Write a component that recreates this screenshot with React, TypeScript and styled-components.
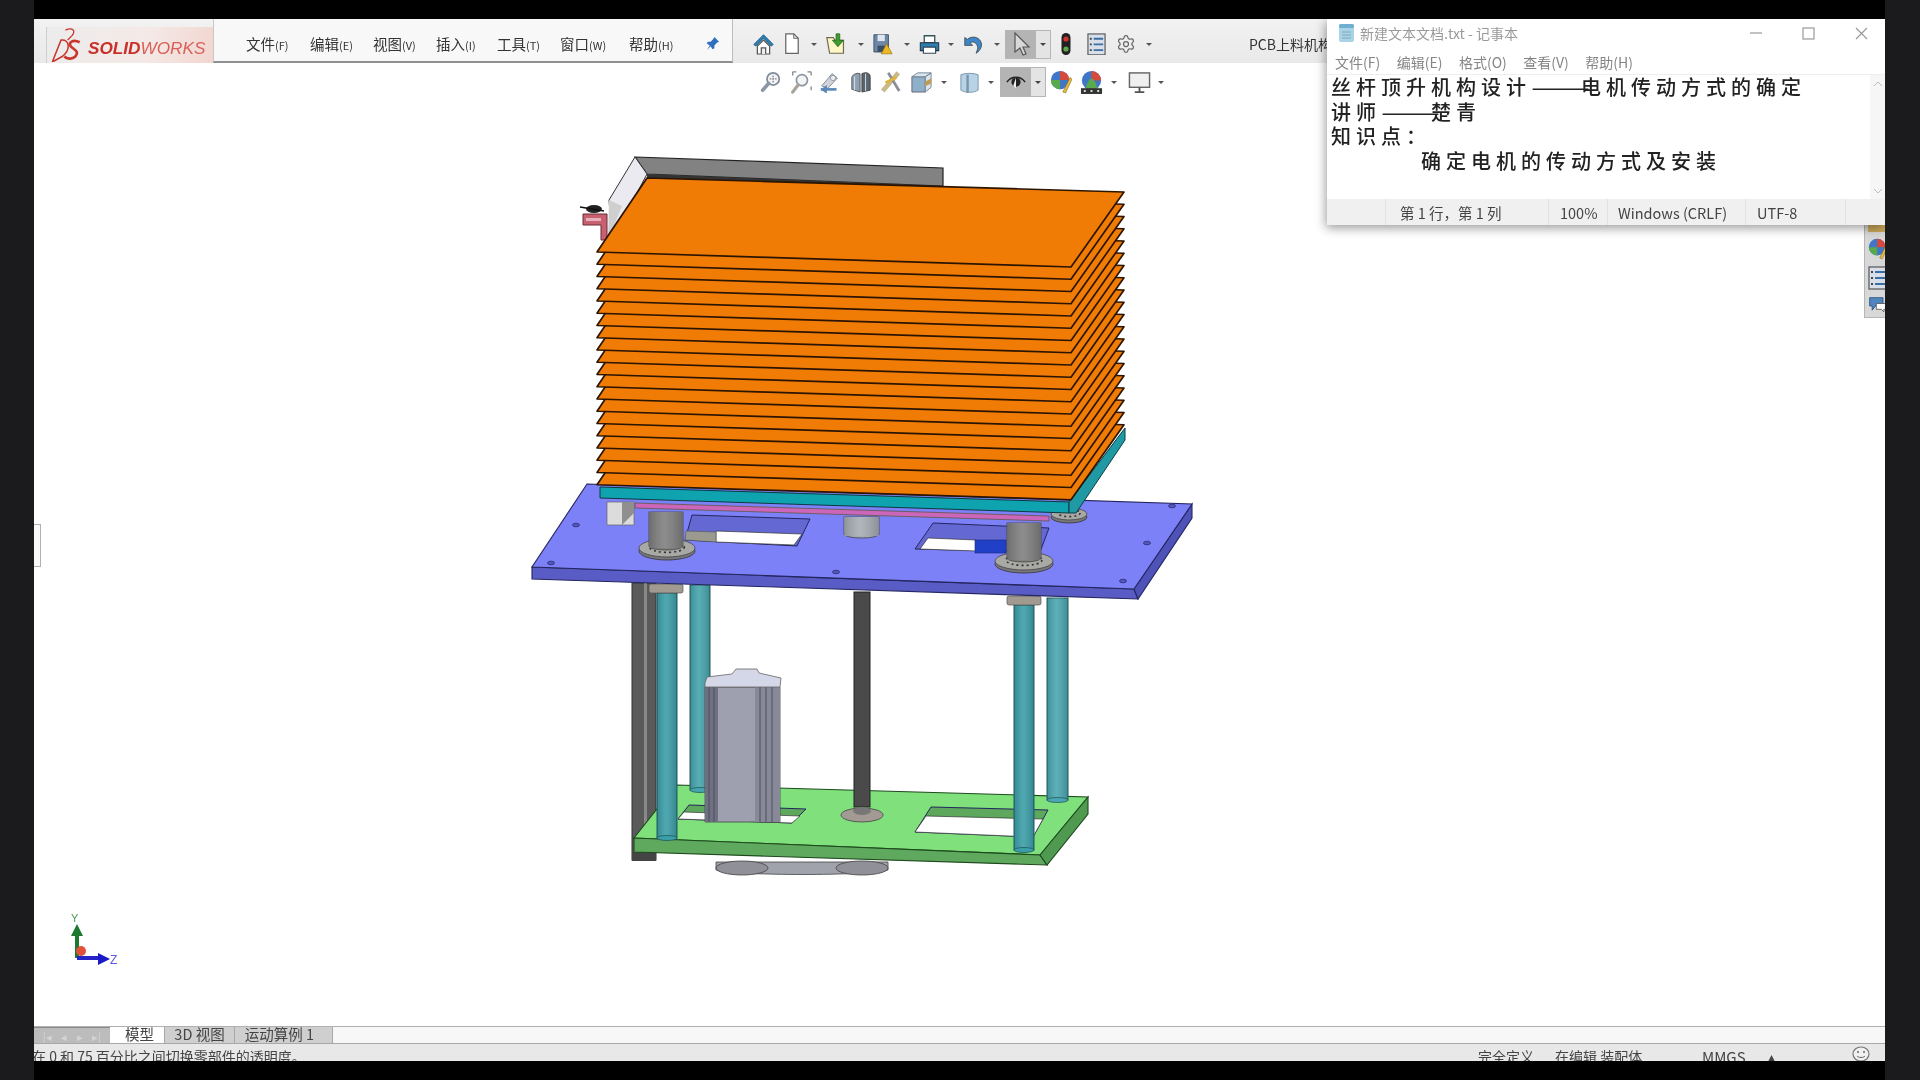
import styled, { createGlobalStyle } from 'styled-components';
import { Settings } from 'lucide-react';

const GlobalStyle = createGlobalStyle`
  html, body {
    margin: 0;
    padding: 0;
    background: #000;
    overflow: hidden;
  }
  * { box-sizing: border-box; }
`;

const cjk = `"Noto Sans CJK SC", "Liberation Sans", sans-serif`;

const Page = styled.div`
  display: grid;
  grid-template-columns: 34px 1fr 35px;
  width: 1920px;
  height: 1080px;
  background: #000;
  font-family: ${cjk};
`;

const SideBar = styled.div`
  background: #1b1b1d;
`;

const Center = styled.div`
  display: flex;
  flex-direction: column;
  min-width: 0;
`;

const Band = styled.div`
  height: 19px;
  flex: none;
  background: #000;
`;

const AppFrame = styled.div`
  position: relative;
  flex: 1;
  display: flex;
  flex-direction: column;
  background: #fff;
  overflow: hidden;
  filter: blur(0.45px);
`;

/* ---- top bar ---- */
const Toolbar = styled.div`
  display: flex;
  height: 44px;
  flex: none;
  background: linear-gradient(#f2f2f2, #e9e9e9);
  position: relative;
  z-index: 2;
`;

const LogoBox = styled.div`
  width: 167px;
  margin: 8px 0 0 12px;
  padding-left: 3px;
  display: flex;
  align-items: center;
  gap: 6px;
  background: linear-gradient(100deg, #ececec, #f4e9e6 60%, #f2d6d0);
  border-left: 1px solid #cfcfcf;
`;

const LogoWord = styled.span`
  font: italic 700 17.2px "Liberation Sans", sans-serif;
  color: #c9302a;
  white-space: nowrap;
  margin-top: 6px;
  em {
    font-weight: 400;
    font-style: italic;
    color: #d9605a;
  }
`;

const MenuPanel = styled.div`
  width: 520px;
  flex: none;
  display: flex;
  align-items: center;
  padding: 6px 0 0 32px;
  background: #f8f8f8;
  border-bottom: 2px solid #8f8f8f;
  border-right: 1px solid #bdbdbd;
  border-left: 1px solid #c8c8c8;
`;

const MenuItem = styled.span<{ $w: number }>`
  width: ${(p) => p.$w}px;
  flex: none;
  font-size: 14.5px;
  color: #333;
  white-space: nowrap;
  small {
    font-size: 11px;
  }
`;

const PinSlot = styled.span`
  display: flex;
  margin-left: 1px;
`;

const ToolStrip = styled.div`
  flex: 1;
  min-width: 0;
  display: flex;
  align-items: center;
  padding-left: 20px;
  padding-top: 6px;
  overflow: hidden;
`;

const HudBar = styled.div`
  position: absolute;
  left: 726px;
  top: 48px;
  height: 30px;
  display: flex;
  align-items: center;
  z-index: 1;
`;

const Slot = styled.span<{ $w: number; $ml?: number }>`
  flex: none;
  display: flex;
  align-items: center;
  justify-content: center;
  width: ${(p) => p.$w}px;
  margin-left: ${(p) => p.$ml ?? 0}px;
  svg {
    display: block;
    width: 100%;
  }
`;

const Caret = styled.span<{ $ml?: number }>`
  flex: none;
  width: 8px;
  margin-left: ${(p) => p.$ml ?? 0}px;
  display: flex;
  justify-content: center;
  &::before {
    content: '';
    border-left: 3px solid transparent;
    border-right: 3px solid transparent;
    border-top: 3px solid #555;
  }
`;

const SplitButton = styled.span<{ $ml?: number; $h: number }>`
  flex: none;
  width: 46px;
  height: ${(p) => p.$h}px;
  margin-left: ${(p) => p.$ml ?? 0}px;
  display: grid;
  grid-template-columns: 30px 1fr;
  border: 1px solid #b5b5b5;
  background: #e4e4e4;
`;

const SplitMain = styled.span`
  background: #b4b4b4;
  display: flex;
  align-items: center;
  justify-content: center;
`;

const SplitArrow = styled.span`
  display: flex;
  align-items: center;
  justify-content: center;
  &::before {
    content: '';
    border-left: 3px solid transparent;
    border-right: 3px solid transparent;
    border-top: 3px solid #444;
  }
`;

const DocTitle = styled.span`
  flex: none;
  margin-left: 96px;
  font-size: 14px;
  color: #333;
  white-space: nowrap;
`;

/* ---- viewport ---- */
const Viewport = styled.div`
  position: relative;
  flex: 1;
  background: #fff;
`;

const Scene = styled.svg`
  position: absolute;
  left: 0;
  top: 0;
`;

const LeftHandle = styled.div`
  position: absolute;
  left: 0;
  top: 505px;
  width: 7px;
  height: 43px;
  background: #fafafa;
  border: 1px solid #b0b0b0;
  border-left: none;
`;

const TaskPane = styled.div`
  position: absolute;
  right: 0;
  top: 204px;
  width: 21px;
  height: 95px;
  padding-left: 3px;
  display: flex;
  flex-direction: column;
  gap: 6px;
  background: #d8d8d8;
  border: 1px solid #b5b5b5;
  border-right: none;
  svg {
    display: block;
    width: 20px;
  }
`;

const TaskPaneGold = styled.span`
  height: 8px;
  flex: none;
  background: #c9a85a;
`;

/* ---- notepad ---- */
const Notepad = styled.div`
  position: absolute;
  left: 1293px;
  right: 0;
  top: 0;
  height: 206px;
  display: flex;
  flex-direction: column;
  background: #fff;
  box-shadow: -1px 3px 10px rgba(0, 0, 0, 0.4);
  z-index: 3;
`;

const NoteTitleBar = styled.div`
  height: 30px;
  flex: none;
  display: flex;
  align-items: center;
  padding: 0 0 2px 11px;
  gap: 5px;
  font-size: 14px;
  color: #9a9a9a;
`;

const WinButtons = styled.div`
  margin-left: auto;
  margin-right: -3px;
  display: flex;
  align-items: center;
  color: #9a9a9a;
  svg {
    display: block;
  }
`;

const WinButton = styled.span`
  width: 53px;
  display: flex;
  justify-content: center;
`;

const NoteMenu = styled.div`
  height: 25px;
  flex: none;
  display: flex;
  align-items: center;
  padding-left: 8px;
  gap: 16.5px;
  font-size: 14px;
  color: #858585;
`;

const NoteBody = styled.div`
  flex: 1;
  display: flex;
  min-height: 0;
  border-top: 1px solid #eee;
`;

const NoteText = styled.div`
  flex: 1;
  padding: 0 0 0 4px;
  font: 500 20px/24.5px ${cjk};
  letter-spacing: 5px;
  color: #222;
  white-space: pre;
  overflow: hidden;
`;

const Dash = styled.span`
  display: inline-block;
  width: 50px;
  letter-spacing: 0;
  transform: scaleX(1.75);
  transform-origin: left center;
`;

const Indented = styled.div`
  padding-left: 90px;
`;

const NoteScroll = styled.div`
  width: 15px;
  flex: none;
  display: flex;
  flex-direction: column;
  justify-content: space-between;
  align-items: center;
  padding: 6px 0 5px;
  background: #f6f6f6;
  color: #bbb;
  svg {
    display: block;
  }
`;

const NoteStatus = styled.div`
  height: 26px;
  flex: none;
  display: flex;
  align-items: center;
  background: #f0f0f0;
  font-size: 14.5px;
  color: #444;
`;

const NoteCell = styled.span<{ $w: number; $pl: number }>`
  width: ${(p) => p.$w}px;
  flex: none;
  height: 100%;
  display: flex;
  align-items: center;
  padding-left: ${(p) => p.$pl}px;
  border-right: 1px solid #e2e2e2;
  white-space: nowrap;
`;

/* ---- bottom ---- */
const TabRow = styled.div`
  height: 17px;
  flex: none;
  display: flex;
  background: #f7f7f7;
  border-top: 1px solid #b0b0b0;
  font-size: 14.5px;
  line-height: 14px;
  color: #444;
`;

const NavBlock = styled.div`
  width: 76px;
  display: flex;
  align-items: center;
  justify-content: space-around;
  padding: 0 4px;
  background: #bcbcbc;
  border-top: 1px solid #8a8a8a;
  color: #d4d4d4;
  font-size: 11px;
`;

const Tab = styled.div<{ $w: number; $active?: boolean; $pl?: number; $pr?: number }>`
  width: ${(p) => p.$w}px;
  padding: 0 ${(p) => p.$pr ?? 0}px 0 ${(p) => p.$pl ?? 0}px;
  text-align: center;
  white-space: nowrap;
  background: ${(p) => (p.$active ? '#fff' : '#cfcfcf')};
  border-right: 1px solid #a8a8a8;
`;

const StatusRow = styled.div`
  height: 18px;
  flex: none;
  display: flex;
  padding: 5px 15px 0 0;
  background: #e8e8e8;
  border-top: 1px solid #a8a8a8;
  font-size: 14px;
  line-height: 15px;
  color: #444;
  overflow: hidden;
  white-space: nowrap;
`;

const StatusMsg = styled.div`
  flex: 1;
  margin-left: -2px;
`;

const StatusItem = styled.div<{ $w: number; $size?: number }>`
  width: ${(p) => p.$w}px;
  flex: none;
  font-size: ${(p) => p.$size ?? 14}px;
`;

const SmileSlot = styled.div`
  flex: none;
  width: 18px;
  margin-top: -3px;
  svg {
    display: block;
  }
`;

/* ---- drawn icons ---- */
const HomeIcon = () => (
  <svg viewBox="0 0 24 26">
    <path d="M12 2 1 13l2 2 9-9 9 9 2-2Z" fill="#2b7fb5" stroke="#1a5a85" strokeWidth="1" />
    <path d="M5 15v9h14v-9l-7-7Z" fill="#fff" stroke="#555" strokeWidth="1.4" />
    <path d="M9.5 24v-7h5v7" fill="#eee" stroke="#555" strokeWidth="1.4" />
  </svg>
);
const PageIcon = () => (
  <svg viewBox="0 0 18 26">
    <path d="M2 2h9l5 5v17H2Z" fill="#fff" stroke="#666" strokeWidth="1.4" />
    <path d="M11 2v5h5" fill="none" stroke="#666" strokeWidth="1.2" />
  </svg>
);
const OpenIcon = () => (
  <svg viewBox="0 0 26 26">
    <path d="M2 6h7l2 3h9v14H5Z" fill="#fff6c8" stroke="#6b6b52" strokeWidth="1.3" />
    <path d="M12 2h4v7h4l-6 7-6-7h4Z" fill="#3f9b2e" stroke="#23651a" strokeWidth="0.8" />
  </svg>
);
const SaveIcon = () => (
  <svg viewBox="0 0 22 26">
    <path d="M1 3h16v19H1Z" fill="#6d87a6" stroke="#3c5068" />
    <path d="M5 3h8v7H5Z" fill="#dfe6ee" />
    <path d="M5 15h8v7H5Z" fill="#3a4f66" />
    <path d="M15 13l6 11H9Z" fill="#f0b71e" stroke="#8a6a10" strokeWidth="0.7" />
  </svg>
);
const PrintIcon = () => (
  <svg viewBox="0 0 24 24">
    <path d="M6 2h12v8H6Z" fill="#fff" stroke="#355" strokeWidth="1.5" />
    <path d="M1.5 10h21v9h-21Z" fill="#2f7eb0" stroke="#234" strokeWidth="1.2" />
    <path d="M5 15h14v7H5Z" fill="#fff" stroke="#345" strokeWidth="1.3" />
  </svg>
);
const UndoIcon = () => (
  <svg viewBox="0 0 24 24">
    <path d="M2 4v9h9L8 10c4-2 8 0 9 6l-2 6c5-3 8-9 5-14-3-5-10-6-15-2Z" fill="#3a86c8" stroke="#444" strokeWidth="0.9" />
  </svg>
);
const CursorIcon = () => (
  <svg viewBox="0 0 20 26" width="20">
    <path d="M4 2v19l5-4 3 7 3-1-3-7h6Z" fill="#d8d8d8" stroke="#555" strokeWidth="1.2" />
  </svg>
);
const LightIcon = () => (
  <svg viewBox="0 0 10 24">
    <rect x="0.5" y="1" width="9" height="22" rx="4.5" fill="#222" />
    <circle cx="5" cy="7" r="2.6" fill="#d0342c" />
    <circle cx="5" cy="17" r="2.6" fill="#5ca84a" />
  </svg>
);
const ListIcon = () => (
  <svg viewBox="0 0 20 24">
    <rect x="1" y="1" width="18" height="22" fill="#d8dfe8" stroke="#555" strokeWidth="1.2" />
    <path d="M7 6h10M7 12h10M7 18h10" stroke="#3a6ea5" strokeWidth="2" />
    <path d="M3 6h2M3 12h2M3 18h2" stroke="#444" strokeWidth="2" />
  </svg>
);
const MagIcon = () => (
  <svg viewBox="0 0 24 26">
    <circle cx="15" cy="9" r="7" fill="#f4f4f4" stroke="#7d8c9b" strokeWidth="2" />
    <path d="M15 5v8M11 9h8" stroke="#889" strokeWidth="1.5" strokeDasharray="2 1" />
    <path d="M10 14 3 22" stroke="#8a95a8" strokeWidth="4" strokeLinecap="round" />
  </svg>
);
const AreaIcon = () => (
  <svg viewBox="0 0 26 26">
    <circle cx="14" cy="11" r="6" fill="#f5f5f5" stroke="#8a96a4" strokeWidth="1.8" />
    <path d="M10 16 4 24" stroke="#a7a59a" strokeWidth="3.5" strokeLinecap="round" />
    <path d="M4 2h4M20 2h4M24 2v4M24 18v4M4 2v4" stroke="#888" strokeWidth="1.4" />
  </svg>
);
const PrevIcon = () => (
  <svg viewBox="0 0 24 26">
    <path d="M3 17 15 3l6 5-11 12Z" fill="#cfd2d8" stroke="#7a8590" />
    <circle cx="16" cy="8" r="3" fill="#eee" stroke="#8a95a0" />
    <path d="M2 21h18" stroke="#5b88b8" strokeWidth="3" />
    <path d="M2 21l7-5v10Z" fill="#5b88b8" />
  </svg>
);
const SectionIcon = () => (
  <svg viewBox="0 0 24 26">
    <path d="M2 8c1-4 7-5 9-4v20l-9-3Z" fill="#8fa0b2" stroke="#555" />
    <path d="M13 4c4-2 9-1 9 3v15l-9 2Z" fill="#59656f" stroke="#444" />
    <path d="M5 7v15M17 4v19" stroke="#dfe5ea" />
  </svg>
);
const DynamicIcon = () => (
  <svg viewBox="0 0 24 26">
    <path d="M3 23 20 3" stroke="#c9b98a" strokeWidth="5" />
    <path d="M9 3l12 20" stroke="#8a8f96" strokeWidth="3" />
    <path d="M6 14 18 8" stroke="#e2b33a" strokeWidth="3" />
  </svg>
);
const ViewOrientIcon = () => (
  <svg viewBox="0 0 24 26">
    <path d="M2 7h14v16H2Z" fill="#8fb0c9" stroke="#667" />
    <path d="M2 7l6-4h14l-6 4ZM16 7l6-4v15l-6 5Z" fill="#dbe5ec" stroke="#789" />
    <path d="M16 12l6-3v5l-6 3Z" fill="#c29b4e" />
  </svg>
);
const CubeIcon = () => (
  <svg viewBox="0 0 24 26">
    <path d="M3 5c4-2 14-2 18 0v16c-4 3-14 3-18 0Z" fill="#b8d2e6" stroke="#7995aa" />
    <path d="M10 5v19" stroke="#7995aa" strokeWidth="2.5" />
  </svg>
);
const EyeIcon = () => (
  <svg viewBox="0 0 24 22" width="22">
    <path d="M2 11c5-7 15-7 20 0" fill="none" stroke="#222" strokeWidth="1.6" />
    <circle cx="12" cy="11" r="5" fill="#222" />
    <path d="M12 6v12l-3-3Z" fill="#eee" />
  </svg>
);
const BallIcon = () => (
  <svg viewBox="0 0 24 26">
    <circle cx="11" cy="11" r="10" fill="#3f76c8" />
    <path d="M11 1a10 10 0 0 1 10 10H11Z" fill="#d64a3c" />
    <path d="M1 11a10 10 0 0 0 10 10V11Z" fill="#58aa4c" />
    <path d="M14 24 22 8l2 2-7 15Z" fill="#e6bb3a" stroke="#7b6418" strokeWidth="0.6" />
  </svg>
);
const SceneIcon = () => (
  <svg viewBox="0 0 24 26">
    <circle cx="12" cy="11" r="10" fill="#3f76c8" />
    <path d="M12 1a10 10 0 0 1 10 10H12Z" fill="#d64a3c" />
    <path d="M6 20c1-8 5-11 6-11s5 3 6 11Z" fill="#58aa4c" />
    <rect x="1" y="19" width="22" height="6" fill="#333" />
    <path d="M4 22h2M11 22h2M18 22h2" stroke="#ddd" strokeWidth="2" />
  </svg>
);
const MonitorIcon = () => (
  <svg viewBox="0 0 24 24">
    <rect x="1.5" y="2" width="21" height="15" fill="#f0f0f0" stroke="#666" strokeWidth="1.5" />
    <path d="M12 17v4M7 22h10" stroke="#555" strokeWidth="2" />
  </svg>
);
const ChatIcon = () => (
  <svg viewBox="0 0 24 20">
    <path d="M2 2h16v10H9l-4 5v-5H2Z" fill="#4f86c0" stroke="#2a4f78" />
    <path d="M10 9h12v7h-3v3l-3-3h-6Z" fill="#fff" stroke="#555" />
  </svg>
);
const PinIcon = () => (
  <svg viewBox="0 0 16 16" width="15">
    <path d="M10 1l5 5-2 1-3 3 0 3-2 1-2-3-4 4 3-5-3-2 1-2 3 0 3-3Z" fill="#2f6fc0" />
  </svg>
);
const DsMark = () => (
  <svg viewBox="2 1 27 31" width="32" height="34">
    <path d="M3 32 11 12c8-1 9 9 1 15l-9 5" fill="none" stroke="#c9362d" strokeWidth="1.4" />
    <path d="M15 3c6-3 10 0 6 5l-4 4" fill="none" stroke="#c9362d" strokeWidth="1.2" />
    <path d="M28 14c-6-3-11 0-8 4 3 3 8 4 4 9-3 3-8 2-10 0" fill="none" stroke="#c9362d" strokeWidth="2.4" />
  </svg>
);
const NoteFileIcon = () => (
  <svg viewBox="0 0 17 20" width="17" height="20">
    <rect x="1" y="2" width="15" height="17" rx="2" fill="#a9d3e6" />
    <rect x="1" y="1" width="15" height="4" rx="1.5" fill="#6fb0d0" />
    <path d="M4 9h9M4 12h9M4 15h9" stroke="#7fa9bd" />
  </svg>
);
const SmileIcon = () => (
  <svg viewBox="0 0 18 16" width="18" height="16">
    <ellipse cx="9" cy="8" rx="8" ry="7" fill="#f0f0f0" stroke="#777" strokeWidth="1.2" />
    <circle cx="6" cy="6" r="1" fill="#666" />
    <circle cx="12" cy="6" r="1" fill="#666" />
    <path d="M5 10c2 2 6 2 8 0" fill="none" stroke="#666" />
  </svg>
);

/* ---- CAD model, in page coordinates ---- */
const plateCount = 19;
const plateStep = 12.25;

const pts = (list: number[][], dy = 0) => list.map(([x, y]) => `${x},${y + dy}`).join(' ');

const Hole = ({ outer, wall, open }: { outer: number[][]; wall: string; open: number[][] }) => (
  <g>
    <polygon points={pts(outer)} fill={wall} stroke="#23265f" strokeWidth="1" />
    <polygon points={pts(open)} fill="#fff" stroke="#333" strokeWidth="0.7" />
  </g>
);

const Rod = ({ x, w, y1, y2, color, edge }: { x: number; w: number; y1: number; y2: number; color: string; edge: string }) => (
  <g>
    <rect x={x} y={y1} width={w} height={y2 - y1} fill={color} stroke={edge} strokeWidth="1" />
    <rect x={x} y={y1} width={w} height={y2 - y1} fill="url(#cyl)" />
    <ellipse cx={x + w / 2} cy={y2} rx={w / 2} ry={2.5} fill={color} stroke={edge} strokeWidth="0.8" />
  </g>
);

const Flange = ({ cx, cy, rx, ry }: { cx: number; cy: number; rx: number; ry: number }) => (
  <g>
    <ellipse cx={cx} cy={cy + 3} rx={rx} ry={ry} fill="#77777c" stroke="#333" strokeWidth="0.8" />
    <ellipse cx={cx} cy={cy} rx={rx} ry={ry} fill="#a8a8a4" stroke="#444" strokeWidth="0.8" />
    <ellipse cx={cx} cy={cy - 1} rx={rx * 0.62} ry={ry * 0.6} fill="none" stroke="#333" strokeWidth="1.6" strokeDasharray="2 3" />
  </g>
);

const BoltHole = ({ x, y }: { x: number; y: number }) => (
  <ellipse cx={x} cy={y} rx={3.5} ry={1.8} fill="#5558b8" stroke="#2a2d78" strokeWidth="0.8" />
);

const Column = ({ x, w, y1, y2, color }: { x: number; w: number; y1: number; y2: number; color: string }) => (
  <g>
    <rect x={x} y={y1} width={w} height={y2 - y1} fill={color} stroke="#444" strokeWidth="0.8" />
    <ellipse cx={x + w / 2} cy={y2} rx={w / 2} ry={4} fill={color} stroke="#444" strokeWidth="0.8" />
    <rect x={x + 0.4} y={y1} width={w - 0.8} height={y2 - y1 + 2} fill={color} />
    <rect x={x + 0.4} y={y1} width={w - 0.8} height={y2 - y1 + 2} fill="url(#cyl)" />
  </g>
);

const Model = () => {
  const plates = Array.from({ length: plateCount + 1 }, (_, i) => plateCount - i);
  return (
    <Scene width="1851" height="963" viewBox="34 63 1851 963">
      <defs>
        <linearGradient id="cyl" x1="0" x2="1" y1="0" y2="0">
          <stop offset="0" stopColor="#000" stopOpacity="0.14" />
          <stop offset="0.45" stopColor="#fff" stopOpacity="0.1" />
          <stop offset="1" stopColor="#000" stopOpacity="0.16" />
        </linearGradient>
      </defs>

      {/* rear frame */}
      <polygon points="635,157 943,168 943,186 647,174" fill="#828282" stroke="#222" strokeWidth="1.2" />
      <polygon points="647,174 943,186 943,190 647,178" fill="#333" />
      <polygon points="635,157 647,174 612,240 609,200" fill="#eaeaf0" stroke="#333" strokeWidth="1" />
      <polygon points="609,200 622,206 608,240" fill="#cfcfcf" />
      <path d="M583 214h24v26h-6v-15h-18Z" fill="#c9606f" stroke="#6a2a38" strokeWidth="1" />
      <rect x="586" y="218" width="15" height="3" fill="#e8b0b8" />
      <ellipse cx="594" cy="209" rx="8" ry="4" fill="#222" />
      <path d="M580 207l24 4" stroke="#111" strokeWidth="1.6" />

      {/* lower plate and belt */}
      <rect x="632" y="583" width="24" height="277" fill="#5a5a5a" stroke="#333" strokeWidth="1" />
      <rect x="644" y="583" width="3" height="277" fill="#888" />
      <rect x="632" y="852" width="24" height="9" fill="#444" />
      <path d="M716 862h172v8c-20 6-150 6-172 0Z" fill="#a0a2ac" stroke="#444" strokeWidth="0.8" />
      <ellipse cx="742" cy="868" rx="26" ry="7" fill="#8f9098" stroke="#444" strokeWidth="0.8" />
      <ellipse cx="862" cy="868" rx="26" ry="7" fill="#8f9098" stroke="#444" strokeWidth="0.8" />
      <polygon points="676,785 1088,797 1040,855 634,838" fill="#7fe07c" stroke="#1e4a1e" strokeWidth="1.1" />
      <polygon points="634,838 1040,855 1047,865 634,852" fill="#5fa95e" stroke="#1e4a1e" strokeWidth="1.1" />
      <polygon points="1040,855 1088,797 1088,814 1047,865" fill="#4f9a50" stroke="#1e4a1e" strokeWidth="1.1" />
      <Hole outer={[[689, 805], [806, 809], [792, 823], [678, 819]]} wall="#5da85c" open={[[684, 812], [800, 816], [792, 823], [678, 819]]} />
      <Hole outer={[[931, 807], [1048, 810], [1033, 837], [915, 832]]} wall="#5da85c" open={[[926, 816], [1043, 819], [1033, 837], [915, 832]]} />

      {/* rods and motor */}
      <Rod x={690} w={20} y1={585} y2={790} color="#45a5ac" edge="#245a60" />
      <Rod x={1047} w={21} y1={598} y2={800} color="#4aa6b0" edge="#245a60" />
      <rect x="854" y="592" width="16" height="215" fill="#4a4a4a" stroke="#222" strokeWidth="1" />
      <ellipse cx="862" cy="815" rx="21" ry="7" fill="#a39a94" stroke="#444" strokeWidth="0.8" />
      <ellipse cx="862" cy="811" rx="9" ry="4" fill="#777" />
      <polygon points="705,687 780,687 780,822 705,822" fill="#9ea0b0" stroke="#444" strokeWidth="0.8" />
      <rect x="705" y="687" width="13" height="135" fill="#6f7182" />
      <rect x="755" y="687" width="25" height="135" fill="#878999" />
      <path d="M709 687v135M714 687v135M760 687v135M766 687v135M772 687v135" stroke="#4c4e5c" strokeWidth="1" />
      <polygon points="705,683 707,677 732,674 736,669 757,669 759,673 781,678 780,687 705,687" fill="#d4d7e8" stroke="#666" strokeWidth="0.8" />
      <Rod x={657} w={20} y1={593} y2={838} color="#3c9ea8" edge="#1f5a60" />
      <Rod x={1014} w={20} y1={605} y2={850} color="#3c9ea8" edge="#1f5a60" />
      <rect x="649" y="584" width="34" height="9" rx="2" fill="#a09a90" stroke="#555" strokeWidth="0.7" />
      <rect x="1007" y="596" width="34" height="9" rx="2" fill="#a09a90" stroke="#555" strokeWidth="0.7" />

      {/* mid plate */}
      <polygon points="532,567 1134,589 1138,599 532,579" fill="#5a5cc6" stroke="#23265f" strokeWidth="1.1" />
      <polygon points="1134,589 1192,504 1192,518 1138,599" fill="#4f52b8" stroke="#23265f" strokeWidth="1.1" />
      <polygon points="587,484 1192,504 1134,589 532,567" fill="#7d81f7" stroke="#23265f" strokeWidth="1.1" />
      <Hole outer={[[692, 515], [810, 519], [797, 546], [685, 540]]} wall="#6468d2" open={[[716, 531], [802, 534], [794, 545], [716, 542]]} />
      <Hole outer={[[933, 523], [1049, 528], [1040, 552], [915, 549]]} wall="#6468d2" open={[[928, 538], [976, 540], [976, 551], [920, 549]]} />
      <polygon points="686,531 716,532 716,542 685,540" fill="#9a9a90" stroke="#555" strokeWidth="0.6" />
      <rect x="975" y="540" width="31" height="13" fill="#2140c8" stroke="#1a2a80" strokeWidth="0.6" />
      <BoltHole x={576} y={525} />
      <BoltHole x={1147} y={543} />
      <BoltHole x={1172} y={506} />
      <BoltHole x={551} y={563} />
      <BoltHole x={836} y={572} />
      <BoltHole x={1123} y={581} />
      <rect x="607" y="502" width="27" height="23" fill="#dcdcdc" stroke="#666" strokeWidth="0.7" />
      <polygon points="622,502 634,502 634,513 622,525" fill="#8f8f8f" />
      <Flange cx={1069} cy={514} rx={18} ry={6} />
      <Column x={844} w={35} y1={517} y2={534} color="#a8adb4" />
      <Flange cx={667} cy={548} rx={28} ry={9} />
      <Column x={649} w={34} y1={512} y2={546} color="#808080" />
      <Flange cx={1024} cy={561} rx={29} ry={9} />
      <Column x={1007} w={34} y1={523} y2={558} color="#808080" />

      {/* lift table */}
      <polygon points="635,503 1049,516 1049,521 635,508" fill="#cb66ba" stroke="#553" strokeWidth="0.7" />
      <polygon points="600,487 1069,502 1069,513 600,498" fill="#0fa3b0" stroke="#0d3a40" strokeWidth="1" />
      <polygon points="1069,502 1125,428 1125,440 1076,513 1069,513" fill="#1f9aa5" stroke="#0d3a40" strokeWidth="1" />

      {/* stacked boards, bottom one first */}
      {plates.map((k) => (
        <polygon
          key={k}
          points={pts([[647, 178], [1124, 192], [1071, 267], [597, 252]], k * plateStep)}
          fill="#f07c06"
          stroke="#2c1500"
          strokeWidth={1.7}
          strokeLinejoin="round"
        />
      ))}

      {/* triad */}
      <path d="M77 958V930" stroke="#1c7a2e" strokeWidth="4" />
      <polygon points="77,924 71,936 83,936" fill="#1c7a2e" />
      <circle cx="81" cy="951" r="5" fill="#e0533a" />
      <path d="M77 958h24" stroke="#2424c8" strokeWidth="4" />
      <polygon points="110,959 98,953 98,965" fill="#1a1ac8" />
      <text x="71" y="922" fontSize="11" fill="#4a9a5a" fontFamily="Liberation Sans">Y</text>
      <text x="110" y="964" fontSize="12" fill="#5a5ae0" fontFamily="Liberation Sans">Z</text>
    </Scene>
  );
};

export default function App() {
  return (
    <Page>
      <GlobalStyle />
      <SideBar />
      <Center>
        <Band />
        <AppFrame>
          <Toolbar>
            <LogoBox>
              <DsMark />
              <LogoWord>
                SOLID<em>WORKS</em>
              </LogoWord>
            </LogoBox>
            <MenuPanel>
              <MenuItem $w={64}>文件<small>(F)</small></MenuItem>
              <MenuItem $w={63}>编辑<small>(E)</small></MenuItem>
              <MenuItem $w={63}>视图<small>(V)</small></MenuItem>
              <MenuItem $w={61}>插入<small>(I)</small></MenuItem>
              <MenuItem $w={63}>工具<small>(T)</small></MenuItem>
              <MenuItem $w={69}>窗口<small>(W)</small></MenuItem>
              <MenuItem $w={75}>帮助<small>(H)</small></MenuItem>
              <PinSlot><PinIcon /></PinSlot>
            </MenuPanel>
            <ToolStrip>
              <Slot $w={21}><HomeIcon /></Slot>
              <Slot $w={16} $ml={10}><PageIcon /></Slot>
              <Caret $ml={10} />
              <Slot $w={24} $ml={7}><OpenIcon /></Slot>
              <Caret $ml={8} />
              <Slot $w={20} $ml={8}><SaveIcon /></Slot>
              <Caret $ml={10} />
              <Slot $w={21} $ml={8}><PrintIcon /></Slot>
              <Caret $ml={7} />
              <Slot $w={21} $ml={8}><UndoIcon /></Slot>
              <Caret $ml={9} />
              <SplitButton $ml={4} $h={29}>
                <SplitMain><CursorIcon /></SplitMain>
                <SplitArrow />
              </SplitButton>
              <Slot $w={10} $ml={10}><LightIcon /></Slot>
              <Slot $w={19} $ml={16}><ListIcon /></Slot>
              <Slot $w={20} $ml={10}><Settings size={20} color="#666" strokeWidth={1.5} /></Slot>
              <Caret $ml={9} />
              <DocTitle>PCB上料机构</DocTitle>
            </ToolStrip>
          </Toolbar>

          <HudBar>
            <Slot $w={21}><MagIcon /></Slot>
            <Slot $w={24} $ml={8}><AreaIcon /></Slot>
            <Slot $w={21} $ml={6}><PrevIcon /></Slot>
            <Slot $w={22} $ml={10}><SectionIcon /></Slot>
            <Slot $w={22} $ml={8}><DynamicIcon /></Slot>
            <Slot $w={23} $ml={8}><ViewOrientIcon /></Slot>
            <Caret $ml={7} />
            <Slot $w={23} $ml={10}><CubeIcon /></Slot>
            <Caret $ml={6} />
            <SplitButton $ml={5} $h={30}>
              <SplitMain><EyeIcon /></SplitMain>
              <SplitArrow />
            </SplitButton>
            <Slot $w={22} $ml={4}><BallIcon /></Slot>
            <Slot $w={23} $ml={8}><SceneIcon /></Slot>
            <Caret $ml={7} />
            <Slot $w={23} $ml={10}><MonitorIcon /></Slot>
            <Caret $ml={6} />
          </HudBar>

          <Viewport>
            <Model />
          </Viewport>

          <TabRow>
            <NavBlock><span>|◂</span><span>◂</span><span>▸</span><span>▸|</span></NavBlock>
            <Tab $w={55} $active $pl={5}>模型</Tab>
            <Tab $w={70}>3D 视图</Tab>
            <Tab $w={98} $pr={8}>运动算例 1</Tab>
          </TabRow>
          <StatusRow>
            <StatusMsg>在 0 和 75 百分比之间切换零部件的透明度。</StatusMsg>
            <StatusItem $w={77}>完全定义</StatusItem>
            <StatusItem $w={147}>在编辑 装配体</StatusItem>
            <StatusItem $w={66} $size={15}>MMGS</StatusItem>
            <StatusItem $w={84}>▴</StatusItem>
            <SmileSlot><SmileIcon /></SmileSlot>
          </StatusRow>

          <LeftHandle />
          <TaskPane>
            <TaskPaneGold />
            <BallIcon />
            <ListIcon />
            <ChatIcon />
          </TaskPane>

          <Notepad>
            <NoteTitleBar>
              <NoteFileIcon />
              新建文本文档.txt - 记事本
              <WinButtons>
                <WinButton>
                  <svg width="12" height="12" viewBox="0 0 12 12"><path d="M0 6h12" stroke="currentColor" strokeWidth="1.2" /></svg>
                </WinButton>
                <WinButton>
                  <svg width="13" height="13" viewBox="0 0 13 13"><rect x="1" y="1" width="11" height="11" fill="none" stroke="currentColor" strokeWidth="1.2" /></svg>
                </WinButton>
                <WinButton>
                  <svg width="13" height="13" viewBox="0 0 13 13"><path d="M1 1l11 11M12 1 1 12" stroke="currentColor" strokeWidth="1.2" /></svg>
                </WinButton>
              </WinButtons>
            </NoteTitleBar>
            <NoteMenu>
              <span>文件(F)</span>
              <span>编辑(E)</span>
              <span>格式(O)</span>
              <span>查看(V)</span>
              <span>帮助(H)</span>
            </NoteMenu>
            <NoteBody>
              <NoteText>
                <div>丝杆顶升机构设计<Dash>——</Dash>电机传动方式的确定</div>
                <div>讲师<Dash>——</Dash>楚青</div>
                <div>知识点：</div>
                <Indented>确定电机的传动方式及安装</Indented>
              </NoteText>
              <NoteScroll>
                <svg width="10" height="6" viewBox="0 0 10 6"><path d="M1 5l4-4 4 4" fill="none" stroke="currentColor" /></svg>
                <svg width="10" height="6" viewBox="0 0 10 6"><path d="M1 1l4 4 4-4" fill="none" stroke="currentColor" /></svg>
              </NoteScroll>
            </NoteBody>
            <NoteStatus>
              <NoteCell $w={59} $pl={0} />
              <NoteCell $w={163} $pl={14}>第 1 行，第 1 列</NoteCell>
              <NoteCell $w={59} $pl={11}>100%</NoteCell>
              <NoteCell $w={138} $pl={10}>Windows (CRLF)</NoteCell>
              <NoteCell $w={100} $pl={11}>UTF-8</NoteCell>
            </NoteStatus>
          </Notepad>
        </AppFrame>
        <Band />
      </Center>
      <SideBar />
    </Page>
  );
}
